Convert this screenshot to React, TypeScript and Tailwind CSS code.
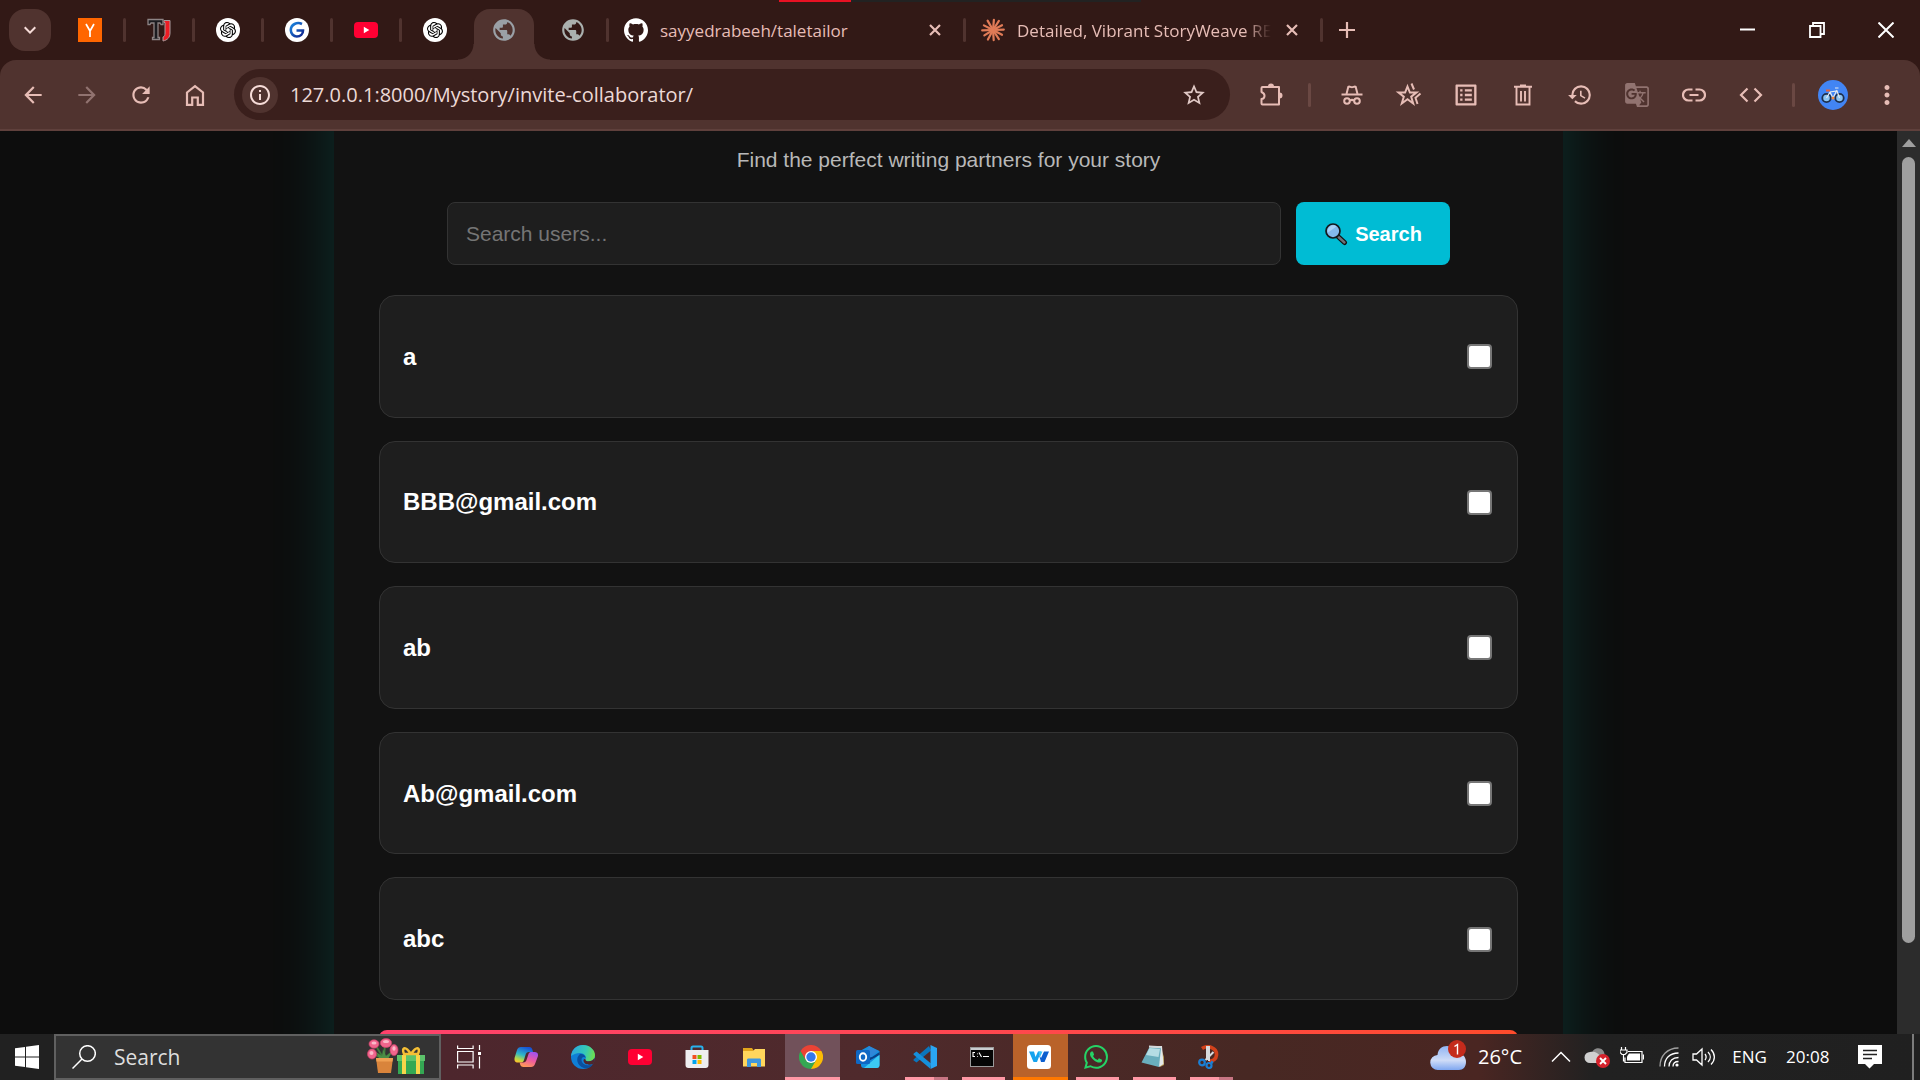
import type { ReactNode } from "react";
import {
  MdArrowBack,
  MdArrowForward,
  MdRefresh,
  MdInfoOutline,
  MdStarBorder,
  MdOutlineListAlt,
  MdHistory,
  MdGTranslate,
  MdMoreVert,
  MdPublic,
  MdKeyboardArrowDown,
} from "react-icons/md";
import { SiOpenai, SiGithub, SiWhatsapp } from "react-icons/si";

/* ---------- favicons ---------- */

const OpenAi = () => (
  <span className="grid size-6 place-items-center rounded-full bg-white text-black">
    <SiOpenai size={16} />
  </span>
);

const YCombinator = () => (
  <svg className="size-6" viewBox="0 0 24 24">
    <rect width="24" height="24" fill="#ff6600" />
    <path d="M8 6l4 7 4-7M12 13v6" fill="none" stroke="#fff" strokeWidth="1.7" />
  </svg>
);

const TypingFavicon = () => (
  <svg className="size-6" viewBox="0 0 24 24">
    <path d="M1 1.500h15v5h-2l-1-1.500h-2v14.500h1.500v2h-7v-2H7V5H4L3 6.500H1z" fill="#1b1b1f" stroke="#8d8485" strokeWidth="1.300" />
    <path d="M17 2.500h6V15c0 4.500-2.500 7-7 8V19c1.500-.5 2-1.500 2-4V4.500h-1z" fill="#ed1c24" stroke="#a99a9b" strokeWidth="1" />
  </svg>
);

const GFavicon = () => (
  <svg className="size-6" viewBox="0 0 24 24">
    <defs>
      <linearGradient id="gfav" x1="0" y1="0" x2="1" y2="1">
        <stop offset="0" stopColor="#1b87e0" />
        <stop offset="1" stopColor="#10218b" />
      </linearGradient>
    </defs>
    <circle cx="12" cy="12" r="12" fill="#fff" />
    <path d="M17 6C12 3.500 5.800 6.500 5.800 12c0 4 3 6.500 6 6.500 3.500 0 6.200-2.300 6.200-6h-6.500" fill="none" stroke="url(#gfav)" strokeWidth="2.600" />
  </svg>
);

const YouTube = () => (
  <svg className="size-6" viewBox="0 0 24 24">
    <rect x="0" y="4" width="24" height="16" rx="4" fill="#ff0033" />
    <path d="M9.800 8.700v6.600l5.500-3.300z" fill="#fff" />
  </svg>
);

const Claude = () => (
  <svg className="size-6 shrink-0" viewBox="0 0 24 24" stroke="#e07b57" strokeWidth="2.200" strokeLinecap="round">
    {[5, 33, 62, 88, 118, 147, 176, 208, 238, 268, 297, 330].map((a, i) => (
      <line key={a} x1="12" y1="12" x2="12" y2={i % 2 ? 1.2 : 1.8} transform={`rotate(${a} 12 12)`} />
    ))}
  </svg>
);

/* ---------- toolbar drawings ---------- */

const HomeIcon = () => (
  <svg className="size-[26px]" viewBox="0 0 26 26" fill="none" stroke="currentColor" strokeWidth="2.200">
    <path d="M5 10.500L13 4.200l8 6.300v12.300h-5.200V15.500h-5.600v7.300H5z" />
  </svg>
);

const CloseX = () => (
  <svg className="size-3" viewBox="0 0 12 12">
    <path d="M1 1l10 10M11 1L1 11" stroke="currentColor" strokeWidth="2.200" />
  </svg>
);

const PlusIcon = () => (
  <svg className="size-4" viewBox="0 0 16 16">
    <path d="M8 0v16M0 8h16" stroke="currentColor" strokeWidth="2.200" />
  </svg>
);

const StarEcho = () => (
  <svg className="size-7" viewBox="0 0 28 28" fill="none" stroke="currentColor" strokeWidth="2">
    <path d="M12.500 5.500l2.400 6h6.600l-5.300 4.200 2 6.800-5.700-4.200-5.700 4.200 2-6.800L3.500 11.500h6.600z" />
    <path d="M16.500 2.500l2.500 6M25.500 12.500l-5 4.300 2 6.200" />
  </svg>
);

const Puzzle = () => (
  <svg className="size-7" viewBox="0 0 28 28">
    <path d="M5.500 6h16.500v17.500H5.500c-.8 0-1-.4-1-1V18c3.500-.5 4.500-5 0-7V7c0-.6.300-1 1-1z" fill="none" stroke="currentColor" strokeWidth="2" strokeLinejoin="round" />
    <path d="M11 5.500a3 3 0 0 1 6 0zM22.500 11.500a3 3 0 0 1 0 6z" fill="currentColor" />
  </svg>
);

const Incognito = () => (
  <svg className="size-6" viewBox="0 0 24 24" fill="none" stroke="currentColor" strokeWidth="2">
    <path d="M1.500 11.500h21" />
    <path d="M6.500 11l1.800-7.200c1.200-.8 2.200.5 3.700.5s2.500-1.300 3.700-.5L17.500 11" />
    <circle cx="7" cy="18" r="2.800" />
    <circle cx="17" cy="18" r="2.800" />
    <path d="M9.800 17.800c1.200-1 3.200-1 4.400 0" />
  </svg>
);

const Trash = () => (
  <svg className="size-6" viewBox="0 0 24 24" fill="none" stroke="currentColor" strokeWidth="1.900">
    <path d="M3 3.800h18M9 2.500h6M5.500 4.500V21.500h13V4.500M10 8v10.500M14 8v10.500" />
  </svg>
);

const LinkIcon = () => (
  <svg className="size-6" viewBox="0 0 24 24" fill="none" stroke="currentColor" strokeWidth="2.200">
    <path d="M10.500 6.500H6.500a5.500 5.500 0 0 0 0 11h4M13.500 6.500h4a5.500 5.500 0 0 1 0 11h-4M7.500 12h9" />
  </svg>
);

const CodeIcon = () => (
  <svg className="size-6" viewBox="0 0 24 24" fill="none" stroke="currentColor" strokeWidth="2.200">
    <path d="M8.500 5.500L2 12l6.500 6.500M15.500 5.500L22 12l-6.500 6.500" />
  </svg>
);

const Bike = () => (
  <svg className="size-[30px]" viewBox="0 0 30 30" fill="none">
    <circle cx="15" cy="15" r="15" fill="#4285f4" />
    <g stroke="#1d2f4c" strokeWidth="1.800">
      <circle cx="8.500" cy="18" r="4.200" fill="#8cc4f2" />
      <circle cx="21.500" cy="18" r="4.200" fill="#8cc4f2" />
    </g>
    <path d="M8.500 18l3.500-6 7-1 2.500 7M12 12l3 6 4-8M17 8h3.500" stroke="#e4eaf0" strokeWidth="1.200" />
    <path d="M8 10.500h4" stroke="#e8623a" strokeWidth="2" />
    <circle cx="15" cy="18" r="1.500" fill="#f28a3c" />
  </svg>
);

/* ---------- tabs ---------- */

const Sep = ({ hidden = false }: { hidden?: boolean }) => (
  <span className={`h-6 w-[3px] shrink-0 rounded-full ${hidden ? "" : "bg-[#50332f]"}`} />
);

const IconTab = ({ label, children, sep = true }: { label: string; children: ReactNode; sep?: boolean }) => (
  <div className="flex w-[69px] shrink-0 items-center">
    <button aria-label={label} className="grid flex-1 place-items-center text-[#aab0ae]">
      {children}
    </button>
    <Sep hidden={!sep} />
  </div>
);

const ActiveTab = () => (
  <div className="flex w-[69px] shrink-0 items-end self-stretch px-[3px] pr-[6px]">
    <button
      aria-label="Invite collaborators"
      className="relative grid h-[51px] flex-1 place-items-center rounded-t-2xl bg-[#50332f] pb-[9px] text-[#9aa0a6] before:absolute before:bottom-0 before:-left-4 before:size-4 before:bg-[radial-gradient(circle_at_0_0,transparent_15px,#50332f_16px)] after:absolute after:-right-4 after:bottom-0 after:size-4 after:bg-[radial-gradient(circle_at_100%_0,transparent_15px,#50332f_16px)]"
    >
      <MdPublic size={26} />
    </button>
  </div>
);

const WideTab = ({ icon, title, fade = false }: { icon: ReactNode; title: string; fade?: boolean }) => (
  <div className="flex w-[357px] shrink-0 items-center pl-[15px]">
    {icon}
    <button
      className={`ml-3 w-[258px] whitespace-nowrap pt-[2px] text-left text-[17px] leading-6 text-[#e7bdb6] ${
        fade ? "[mask-image:linear-gradient(to_right,black_228px,transparent_254px)]" : ""
      }`}
    >
      {title}
    </button>
    <button aria-label={`Close ${title}`} className="ml-auto mr-[22px] text-[#e7bdb6]">
      <CloseX />
    </button>
    <Sep />
  </div>
);

const TabStrip = () => (
  <header className="flex h-[60px] shrink-0 items-center bg-[#321916] font-[Open_Sans,Noto_Sans,sans-serif]">
    <button aria-label="Search tabs" className="ml-[9px] mr-[6px] grid size-[42px] shrink-0 place-items-center rounded-2xl bg-[#50332f] text-[#f6dcd8]">
      <MdKeyboardArrowDown size={24} />
    </button>
    <IconTab label="Hacker News"><YCombinator /></IconTab>
    <IconTab label="Typing"><TypingFavicon /></IconTab>
    <IconTab label="ChatGPT"><OpenAi /></IconTab>
    <IconTab label="Grammar"><GFavicon /></IconTab>
    <IconTab label="YouTube"><YouTube /></IconTab>
    <IconTab label="ChatGPT" sep={false}><OpenAi /></IconTab>
    <ActiveTab />
    <IconTab label="Local page"><MdPublic size={26} /></IconTab>
    <WideTab icon={<SiGithub size={24} className="shrink-0 text-white" />} title="sayyedrabeeh/taletailor" />
    <WideTab icon={<Claude />} title="Detailed, Vibrant StoryWeave RE" fade />
    <button aria-label="New tab" className="ml-4 text-[#e7bdb6]">
      <PlusIcon />
    </button>
    <div className="ml-auto flex items-center text-white">
      <button aria-label="Minimize" className="grid w-[69px] place-items-center">
        <svg className="size-4" viewBox="0 0 16 16"><path d="M0 7.500h15" stroke="currentColor" strokeWidth="2" /></svg>
      </button>
      <button aria-label="Restore" className="grid w-[69px] place-items-center">
        <svg className="size-4" viewBox="0 0 16 16" fill="none" stroke="currentColor" strokeWidth="1.800">
          <path d="M1 4h10.500v11H1zM4 4V1h11v11h-3.500" />
        </svg>
      </button>
      <button aria-label="Close window" className="grid w-[69px] place-items-center">
        <svg className="size-4" viewBox="0 0 16 16"><path d="M.5.5l15 15M15.500.5l-15 15" stroke="currentColor" strokeWidth="2" /></svg>
      </button>
    </div>
  </header>
);

/* ---------- address bar ---------- */

const ToolButton = ({ label, children }: { label: string; children: ReactNode }) => (
  <button aria-label={label} className="grid w-[57px] place-items-center">
    {children}
  </button>
);

const Toolbar = () => (
  <div className="bg-[#321916]">
    <nav className="flex h-[71px] items-center rounded-t-2xl border-b-2 border-[#5f403c] bg-[#50332f] font-[Open_Sans,Noto_Sans,sans-serif] text-[#e7bdb6]">
      <div className="flex shrink-0 items-center gap-[28px] pl-5">
        <button aria-label="Back"><MdArrowBack size={26} /></button>
        <button aria-label="Forward" className="text-[#917370]"><MdArrowForward size={26} /></button>
        <button aria-label="Reload"><MdRefresh size={26} /></button>
        <button aria-label="Home"><HomeIcon /></button>
      </div>
      <div className="ml-[26px] flex h-[51px] min-w-0 flex-1 items-center rounded-full bg-[#3a1f1c] pr-[23px] pl-2">
        <button aria-label="Site information" className="grid size-9 shrink-0 place-items-center rounded-full bg-[#50332f] text-[#f6dcd8]">
          <MdInfoOutline size={24} />
        </button>
        <input
          aria-label="Address"
          defaultValue="127.0.0.1:8000/Mystory/invite-collaborator/"
          className="ml-3 min-w-0 flex-1 bg-transparent text-[20px] text-[#ecd9d6] outline-none"
        />
        <button aria-label="Bookmark" className="text-[#e0c8c5]"><MdStarBorder size={26} /></button>
      </div>
      <button aria-label="Extensions" className="ml-[27px]"><Puzzle /></button>
      <span className="ml-[23px] mr-[12px] h-6 w-[3px] rounded-full bg-[#6a4843]" />
      <ToolButton label="Incognito"><Incognito /></ToolButton>
      <ToolButton label="Bookmarks"><StarEcho /></ToolButton>
      <ToolButton label="Reading list"><MdOutlineListAlt size={28} /></ToolButton>
      <ToolButton label="Delete data"><Trash /></ToolButton>
      <ToolButton label="History"><MdHistory size={26} /></ToolButton>
      <ToolButton label="Translate"><MdGTranslate size={26} className="text-[#917370]" /></ToolButton>
      <ToolButton label="Copy link"><LinkIcon /></ToolButton>
      <ToolButton label="Developer tools"><CodeIcon /></ToolButton>
      <span className="ml-[13px] mr-[23px] h-6 w-[3px] rounded-full bg-[#6a4843]" />
      <button aria-label="Profile"><Bike /></button>
      <button aria-label="Menu" className="ml-6 mr-[18px]"><MdMoreVert size={30} /></button>
    </nav>
  </div>
);

/* ---------- page ---------- */

const users = ["a", "BBB@gmail.com", "ab", "Ab@gmail.com", "abc"];

const Magnifier = () => (
  <svg className="size-6" viewBox="0 0 24 24">
    <path d="M14 14.500l6.500 6" stroke="#111" strokeWidth="5" strokeLinecap="round" />
    <path d="M14.500 15l6 5.500" stroke="#6d7178" strokeWidth="2.400" strokeLinecap="round" />
    <circle cx="9" cy="9" r="7" fill="#83b9ec" stroke="#15181c" strokeWidth="1.700" />
    <path d="M4 10.500a5.500 5.500 0 0 1 8.500-6z" fill="#a9d1f6" />
  </svg>
);

const Page = () => (
  <div className="flex min-h-0 flex-1 bg-[#0d0d0d] font-[Liberation_Sans,Arial,sans-serif]">
    <main className="min-w-0 flex-1 overflow-hidden">
      <div className="mx-auto -mt-20 max-w-[1229px] bg-[#121212] px-[45px] pt-20 pb-20 shadow-[0_0_60px_rgba(0,255,234,0.15)]">
        <p className="pt-4 text-center text-[21px] leading-[26px] text-[#b8b8b8]">Find the perfect writing partners for your story</p>
        <form className="mx-auto mt-[29px] flex h-[63px] max-w-[1003px] gap-[15px]" onSubmit={(e) => e.preventDefault()}>
          <input
            type="search"
            aria-label="Search users"
            placeholder="Search users..."
            className="min-w-0 flex-1 rounded-lg border border-[#333] bg-[#1e1e1e] px-[18px] text-[21px] text-white placeholder-[#757575] outline-none"
          />
          <button className="flex w-[154px] items-center justify-center gap-[7px] rounded-lg bg-[#00bcd4] pt-px text-[20px] font-bold text-white">
            <Magnifier />
            Search
          </button>
        </form>
        <ul className="mt-[30px] grid h-[705px] auto-rows-fr gap-[23px]">
          {users.map((name) => (
            <li key={name} className="rounded-2xl border border-[#333] bg-[#1e1e1e]">
              <label className="flex h-full items-center justify-between pt-px pr-[25px] pl-[23px] text-[24px] font-bold text-white">
                {name}
                <input
                  type="checkbox"
                  className="size-[25px] appearance-none rounded-[4px] border-2 border-[#767676] bg-white checked:bg-[#00bcd4]"
                />
              </label>
            </li>
          ))}
        </ul>
        <button aria-label="Send invitations" className="mt-[30px] block h-16 w-full rounded-lg bg-linear-to-r from-[#ff416c] to-[#ff4b2b]" />
      </div>
    </main>
    <aside aria-label="Scrollbar" className="flex w-[23px] shrink-0 flex-col items-center bg-[#2c2c2c]">
      <svg className="mt-2 h-2 w-3.5" viewBox="0 0 14 8"><path d="M7 0l7 8H0z" fill="#9f9f9f" /></svg>
      <div className="mt-[10px] mb-[91px] w-[13px] flex-1 rounded-full bg-[#9f9f9f]" />
    </aside>
  </div>
);

/* ---------- taskbar drawings ---------- */

const WindowsLogo = () => (
  <svg className="size-6" viewBox="0 0 24 24" fill="#fff">
    <path d="M0 3.300l10-1.400V11.500H0zM11 1.800L24 0v11.500H11zM0 12.500h10v9.600L0 20.700zM11 12.500h13V24l-13-1.800z" />
  </svg>
);

const Flowers = () => (
  <svg className="h-[38px] w-[58px]" viewBox="0 0 58 38">
    <path d="M17 21L9 8M17 21l1-15M17 21L27 12M17 21L6 16" stroke="#3f7d3c" strokeWidth="1.800" fill="none" />
    <path d="M12 20l-3-6 6 4 1-7 3 7 6-4-4 7z" fill="#4c8d45" />
    <g fill="#f0668d" stroke="#cf3f68" strokeWidth="0.700">
      <ellipse cx="7" cy="6" rx="5" ry="4.200" />
      <ellipse cx="19" cy="5" rx="5.700" ry="4.500" />
      <ellipse cx="5" cy="16" rx="4.500" ry="5" />
      <ellipse cx="27" cy="12" rx="4" ry="5.500" />
    </g>
    <g fill="#fbb9c9">
      <ellipse cx="7" cy="5" rx="2.500" ry="1.500" />
      <ellipse cx="19" cy="3.500" rx="3" ry="1.600" />
      <ellipse cx="4.500" cy="15" rx="2" ry="2" />
      <ellipse cx="27" cy="10.500" rx="1.600" ry="2.200" />
    </g>
    <path d="M9 20h17l-2 15H11z" fill="#d9843b" />
    <path d="M9 20h17l-.5 3.500h-16z" fill="#efa052" />
    <path d="M31 20h26v16H31z" fill="#34a853" />
    <path d="M30 17h28v6H30z" fill="#5cc26a" />
    <path d="M35 17h4v19h-4zM49 17h4v19h-4z" fill="#f7d54a" />
    <path d="M44 16c-7-10-9-5-7 0zM44 16c7-10 9-5 7 0z" fill="none" stroke="#f5bf35" strokeWidth="2.500" />
  </svg>
);

const TaskView = () => (
  <svg className="size-6" viewBox="0 0 24 24" fill="none" stroke="#fff" strokeWidth="1.200">
    <path d="M.6 6.500h15.500v10.500H.6zM.6.500v3h15.500v-3M.6 23.500v-3.500h15.500v3.500M22.500 0v5M22.500 11.500v12" />
    <path d="M21 7h3v3h-3z" fill="#fff" stroke="none" />
  </svg>
);

const Copilot = () => (
  <svg className="size-6" viewBox="0 0 24 24">
    <defs>
      <linearGradient id="cpa" x1="0.600" y1="0" x2="0.200" y2="1">
        <stop offset="0" stopColor="#1753d8" />
        <stop offset="0.500" stopColor="#2fb6c8" />
        <stop offset="0.800" stopColor="#b4d84a" />
        <stop offset="1" stopColor="#ffc32b" />
      </linearGradient>
      <linearGradient id="cpb" x1="0.700" y1="0" x2="0.300" y2="1">
        <stop offset="0" stopColor="#a052f0" />
        <stop offset="0.500" stopColor="#ee5aa0" />
        <stop offset="1" stopColor="#ff9a55" />
      </linearGradient>
    </defs>
    <path d="M7 2h8c2 0 3 1 3.500 3l.5 2h-4c-2 0-3 1-3.500 3l-1.500 5c-.6 2-1.500 2.500-3.500 2.500H4c-3 0-4-2-3.300-5L3 5c.7-2 2-3 4-3z" fill="url(#cpa)" />
    <path d="M17 22H9.500c-2 0-3-1-3.500-3l-.3-1.500h3.500c2 0 2.800-1 3.300-2.500l2-6c.6-1.500 1.500-2 3-2h3c3 0 4 2 3.300 4.500L21 19c-.7 2-2 3-4 3z" fill="url(#cpb)" />
  </svg>
);

const Edge = () => (
  <svg className="size-6" viewBox="0 0 24 24">
    <defs>
      <linearGradient id="eda" x1="0" y1="0.300" x2="1" y2="0.500">
        <stop offset="0" stopColor="#2ba7e0" />
        <stop offset="0.600" stopColor="#36c9b5" />
        <stop offset="1" stopColor="#6fdf4d" />
      </linearGradient>
    </defs>
    <circle cx="12" cy="12" r="12" fill="#0f7fd6" />
    <path d="M0 11C.7 4.500 5.500 0 12 0c7 0 12 5 12 10 0 4-3 6.300-6.500 6.300-2.500 0-3.500-1-3-2C15.500 12 14 8 9 8c-4 0-7 1.500-9 3z" fill="url(#eda)" />
    <path d="M9 9c-5 4-3 12 4 14 4 .8 7-1 8.800-3.500-5 2-11 0-11.300-4.500C10.400 12 13 11 14.800 13 14 10 12 8.500 9 9z" fill="#0b4f9e" />
    <path d="M14.500 14.300c-.5 1 .5 2 3 2 2.500 0 5-1.300 6-3.300 1 4-1 5-1.700 6-4 1.500-9 .5-9.300-3.500 0-1 .8-2 2-1.200z" fill="#50262c" />
  </svg>
);

const Store = () => (
  <svg className="size-6" viewBox="0 0 24 24">
    <path d="M6.500 6V3c0-1 .4-1.500 1.500-1.500h8c1 0 1.500.5 1.500 1.500v3" fill="none" stroke="#28b2ee" strokeWidth="2" />
    <path d="M.5 5h23v15a3 3 0 0 1-3 3h-17a3 3 0 0 1-3-3z" fill="#eeeef0" />
    <path d="M7.500 10H11.500v4h-4z" fill="#f25022" />
    <path d="M12.500 10H16.500v4h-4z" fill="#7fba00" />
    <path d="M7.500 15H11.500v4h-4z" fill="#00a4ef" />
    <path d="M12.500 15H16.500v4h-4z" fill="#ffb900" />
  </svg>
);

const Explorer = () => (
  <svg className="size-6" viewBox="0 0 24 24">
    <path d="M1 3h9l2 3h-11z" fill="#e2a51c" />
    <path d="M1 6h10l2-2h10v17.500H1z" fill="#ffd65c" />
    <path d="M5 22v-7c0-1 .5-1.500 1.500-1.500h11c1 0 1.500.5 1.500 1.500v7h-4v-4H9v4z" fill="#3f97dd" />
  </svg>
);

const Chrome = () => (
  <svg className="size-6" viewBox="0 0 24 24">
    <path d="M12 12V6h10.400A12 12 0 0 1 12 24z" fill="#fbbc05" />
    <path d="M12 12l5.200 3L12 24A12 12 0 0 1 1.600 6L7 15z" fill="#34a853" />
    <path d="M12 6h10.400A12 12 0 0 0 1.600 6l5.200 9z" fill="#ea4335" />
    <circle cx="12" cy="12" r="6" fill="#fff" />
    <circle cx="12" cy="12" r="4.700" fill="#3478ea" />
  </svg>
);

const Outlook = () => (
  <svg className="size-6" viewBox="0 0 24 24">
    <path d="M4 6l9-5 10.500 5v14c0 2-1 3-3 3H8c-2 0-3-1-3-3z" fill="#1490df" />
    <path d="M13 1l9 5-9 8H8z" fill="#2f86d8" />
    <path d="M23.500 7v3L9 18l-2-4 9-2z" fill="#0a3f86" />
    <path d="M23.500 10v10c0 2-1 3-3 3H8L22 11z" fill="#3ccbf4" />
    <rect x="0" y="5" width="14" height="14" rx="1.500" fill="#0f68c4" />
    <ellipse cx="7" cy="12" rx="3.200" ry="3.800" fill="none" stroke="#fff" strokeWidth="1.900" />
  </svg>
);

const VsCode = () => (
  <svg className="size-6" viewBox="0 0 24 24">
    <path d="M18 5.500L3.500 17.500 1 15.800c-.7-.6-.7-1.300 0-1.900L16 1z" fill="#0b76bd" />
    <path d="M18 18.500L3.500 6.500 1 8.200c-.7.600-.7 1.300 0 1.900L17 23.500z" fill="#1590dc" />
    <path d="M17.500 0L24 3v18l-6.500 3z" fill="#2aa5f2" />
  </svg>
);

const Cmd = () => (
  <svg className="size-6" viewBox="0 0 24 24">
    <rect x="0.500" y="2.500" width="23" height="19" fill="#050505" stroke="#9a9a9a" />
    <path d="M1 3h22v2H1z" fill="#c9ccd0" />
    <path d="M5 7.500H3v4h2M7.500 8.500v.8M7.500 11v.8M9 7.500l2.500 4.500M13 11.500h6" stroke="#fff" strokeWidth="1.100" fill="none" />
  </svg>
);

const WApp = () => (
  <svg className="size-6" viewBox="0 0 24 24">
    <rect width="24" height="24" rx="3.500" fill="#fff" />
    <path d="M2 6.500h5l1.500 5.500 2.500-5.500h3L10 17H6.500z" fill="#16a3ee" />
    <path d="M11.500 6.500h4L13 12z" fill="#38c4f5" />
    <path d="M12 10l2 3 3-6.500h5L17.500 17H14z" fill="#0b5fd0" />
  </svg>
);

const Notepad = () => (
  <svg className="size-6" viewBox="0 0 24 24">
    <path d="M20 3l3 9v8l-4 2z" fill="#b59a55" />
    <path d="M9 1.500l12-.5 1.500 18-4.500 3z" fill="#e3e8ea" />
    <path d="M8.500 2l11.500 1-2 19L.5 17.500z" fill="#6aaebd" />
    <path d="M8.500 3l10.500 1-1.500 8-12.500-2z" fill="#b6dde4" />
    <path d="M8 1.500l12.500.8" stroke="#d4d8da" strokeWidth="2" />
  </svg>
);

const Snip = () => (
  <svg className="size-6" viewBox="0 0 24 24" fill="none">
    <path d="M4 3.500C10-.5 19 3 18.500 10c-.3 4-3.500 6.500-7.500 6" stroke="#d2411b" strokeWidth="3.600" />
    <path d="M9 1v14M11 1v15M15.500 7l-8 8" stroke="#d7dadd" strokeWidth="2" />
    <circle cx="4" cy="17.500" r="2.800" stroke="#1b7fd4" strokeWidth="2.200" />
    <circle cx="11" cy="20.500" r="2.500" stroke="#1b7fd4" strokeWidth="2.200" />
    <path d="M13 16.500l2 1.500" stroke="#1b7fd4" strokeWidth="2.200" />
  </svg>
);

const Weather = () => (
  <svg className="h-9 w-10" viewBox="0 0 40 36">
    <defs>
      <linearGradient id="cloud" x1="0" y1="0" x2="0" y2="1">
        <stop offset="0" stopColor="#8fb4f3" />
        <stop offset="0.600" stopColor="#cfdcf7" />
        <stop offset="1" stopColor="#7fa7f0" />
      </linearGradient>
    </defs>
    <path d="M8 31a7.500 7.500 0 0 1-.5-15C8 10 12 7 17 7c5 0 9 3 10 8 6-1 9 3.500 9 8 0 5-3 8-7 8z" fill="url(#cloud)" />
    <circle cx="27" cy="10" r="9" fill="#c42b1c" />
    <path d="M24.500 7.500l3-2v10" fill="none" stroke="#fff" strokeWidth="1.400" />
  </svg>
);

const OneDrive = () => (
  <svg className="h-6 w-7" viewBox="0 0 28 24">
    <path d="M8 8c1-5 9-7 12-1l2 8H6z" fill="#8b8b8b" />
    <path d="M6 18a5.500 5.500 0 0 1 0-11c5-1 8 1 10 4v7z" fill="#cfcfcf" />
    <circle cx="19" cy="16" r="7" fill="#d4212b" />
    <path d="M16 13l6 6M22 13l-6 6" stroke="#fff" strokeWidth="1.900" />
  </svg>
);

const Battery = () => (
  <svg className="size-6" viewBox="0 0 24 24" fill="none" stroke="#fff" strokeWidth="1.200">
    <path d="M8 6.500h14v11H5v-5M23.500 9.500v5M1.500 2v3M5.500 2v3M0 5h7v2.500l-2 2H2l-2-2zM3.500 10v6h1.500" />
    <path d="M9 8.500h11v7H7v-4z" fill="#fff" stroke="none" />
  </svg>
);

const Wifi = () => (
  <svg className="size-5" viewBox="0 0 20 20" fill="none" stroke="#fff" strokeWidth="1.300">
    <path d="M1 19.500C1 9 8 1 19.500 1" stroke="#a0a0a0" />
    <path d="M5.500 19.500C5.500 11.500 10.500 6 19.500 6M10 19.500c0-5.500 3.500-9 9.500-9M14 19.500c0-3 2-5 5.500-5" />
    <circle cx="18" cy="18" r="1.600" fill="#fff" stroke="none" />
  </svg>
);

const Volume = () => (
  <svg className="size-6" viewBox="0 0 24 24" fill="none" stroke="#fff" strokeWidth="1.300">
    <path d="M1 9h3.500L10 4v16l-5.500-5H1zM13 9c1.500 2 1.500 4 0 6M16 7c3 3 3 7 0 10M19 4.500c4.500 4.500 4.500 10.500 0 15" />
  </svg>
);

const Notifications = () => (
  <svg className="size-6" viewBox="0 0 24 24">
    <path d="M0 0h24v19h-8l-4.500 4.500L7 19H0z" fill="#fff" />
    <path d="M5 5.500h14M5 9.500h14M5 13.500h9" stroke="#222" strokeWidth="1.300" />
  </svg>
);

type Run = "none" | "one" | "many" | "active" | "alert";

const apps: { label: string; icon: ReactNode; run: Run }[] = [
  { label: "Task view", icon: <TaskView />, run: "none" },
  { label: "Copilot", icon: <Copilot />, run: "none" },
  { label: "Edge", icon: <Edge />, run: "none" },
  { label: "YouTube", icon: <YouTube />, run: "none" },
  { label: "Store", icon: <Store />, run: "none" },
  { label: "File Explorer", icon: <Explorer />, run: "none" },
  { label: "Chrome", icon: <Chrome />, run: "active" },
  { label: "Outlook", icon: <Outlook />, run: "none" },
  { label: "VS Code", icon: <VsCode />, run: "many" },
  { label: "Command Prompt", icon: <Cmd />, run: "one" },
  { label: "Writer", icon: <WApp />, run: "alert" },
  { label: "WhatsApp", icon: <SiWhatsapp size={24} className="text-[#25d366]" />, run: "one" },
  { label: "Notepad", icon: <Notepad />, run: "one" },
  { label: "Snipping Tool", icon: <Snip />, run: "many" },
];

const cellStyle: Record<Run, string> = {
  none: "",
  one: "",
  many: "",
  active: "bg-[#71515a]",
  alert: "bg-[#b9622a]",
};

const Underline = ({ run }: { run: Run }) => {
  if (run === "none") return <span className="h-[3px]" />;
  if (run === "active") return <span className="h-[3px] bg-[#ff98a5]" />;
  if (run === "alert") return <span className="h-[3px] bg-[#ff7800]" />;
  return (
    <span className="mx-[6px] flex h-[3px] bg-[#ff98a5]">
      {run === "many" && <span className="ml-auto w-[14px] bg-[#c77583]" />}
    </span>
  );
};

const Taskbar = () => (
  <footer className="flex h-[46px] shrink-0 items-center bg-[linear-gradient(to_right,#212121_0,#212121_18%,#4d262d_23%,#4f2a2c_45%,#472823_65%,#4a2622_77%,#212121_83%,#202020_100%)] font-[Open_Sans,Noto_Sans,sans-serif] text-white">
    <button aria-label="Start" className="grid w-[54px] shrink-0 place-items-center"><WindowsLogo /></button>
    <label className="flex h-full w-[387px] shrink-0 items-center border-2 border-[#606060] bg-[#333] pr-[14px] pl-4">
      <svg className="size-6 shrink-0" viewBox="0 0 24 24" fill="none" stroke="#fff" strokeWidth="1.500">
        <circle cx="15.500" cy="8.500" r="7.800" />
        <path d="M10 14L.5 23.500" />
      </svg>
      <input aria-label="Search Windows" placeholder="Search" className="ml-[18px] min-w-0 flex-1 bg-transparent pt-[2px] text-[21px] placeholder-[#dedede] outline-none" />
      <Flowers />
    </label>
    <div className="flex h-full shrink-0">
      {apps.map((app) => (
        <button key={app.label} aria-label={app.label} className="flex w-[57px] pl-[2px]">
          <span className={`flex h-full flex-1 flex-col ${cellStyle[app.run]}`}>
            <span className="grid flex-1 place-items-center pt-[2px] pr-[3px]">{app.icon}</span>
            <Underline run={app.run} />
          </span>
        </button>
      ))}
    </div>
    <div className="ml-auto flex items-center text-[17px]">
      <button className="flex items-center gap-2 text-[20px]">
        <Weather />
        26°C
      </button>
      <button aria-label="Hidden icons" className="ml-[29px]">
        <svg className="h-3 w-5" viewBox="0 0 20 12"><path d="M1 10.500L10 1.500l9 9" fill="none" stroke="#fff" strokeWidth="1.500" /></svg>
      </button>
      <span className="ml-[13px]"><OneDrive /></span>
      <span className="ml-[8px]"><Battery /></span>
      <span className="ml-[15px]"><Wifi /></span>
      <span className="ml-[13px]"><Volume /></span>
      <button className="ml-[16px] w-[35px]">ENG</button>
      <time className="ml-[19px] w-[46px]">20:08</time>
      <button aria-label="Notifications" className="ml-[26px]"><Notifications /></button>
      <span className="mr-[6px] ml-[30px] h-[46px] w-[2px] bg-[#7c7c7c]" />
    </div>
  </footer>
);

export default function App() {
  return (
    <div className="relative flex h-screen flex-col overflow-hidden">
      <TabStrip />
      <Toolbar />
      <Page />
      <Taskbar />
      <div className="absolute top-0 left-[779px] flex h-[2px] w-[362px] bg-[#222]">
        <span className="w-[72px] bg-[#e81123]" />
      </div>
    </div>
  );
}
